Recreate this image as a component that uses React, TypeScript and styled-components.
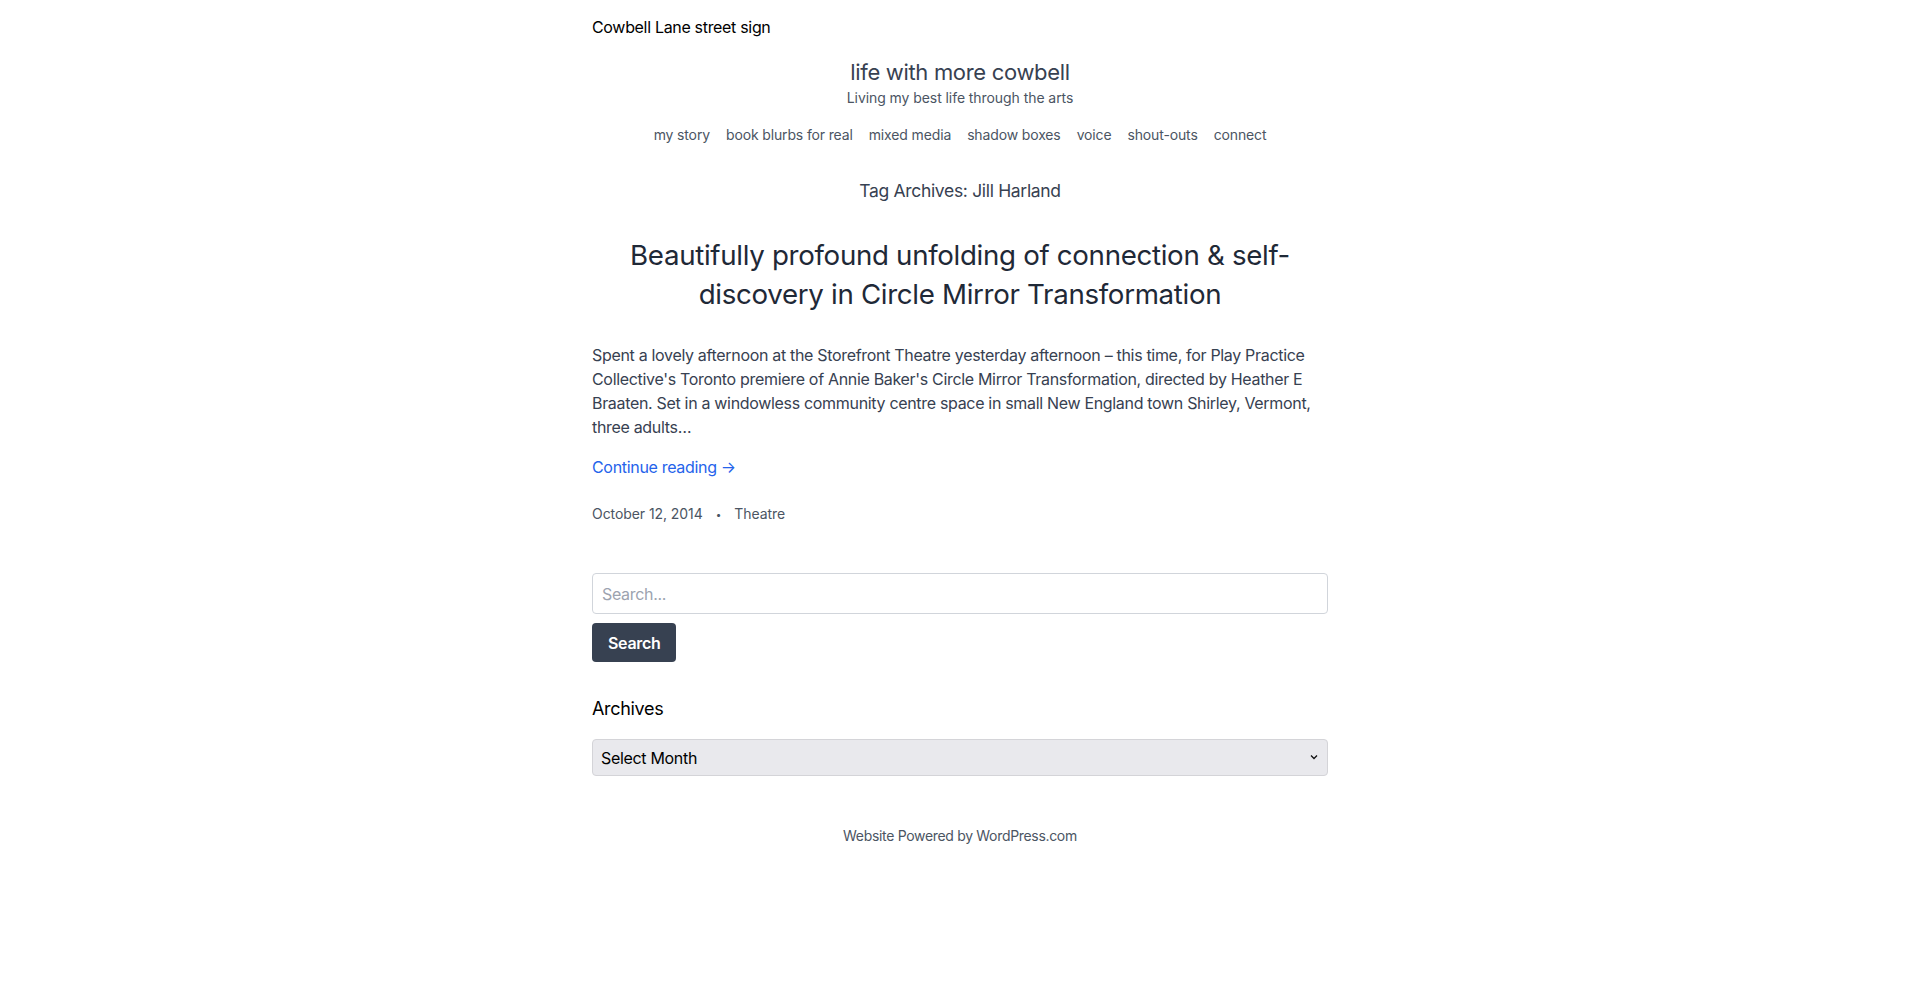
import styled, { createGlobalStyle } from "styled-components";

const GlobalStyle = createGlobalStyle`
  body {
    margin: 0;
    background: #ffffff;
    font-family: Inter, "Noto Sans", "Liberation Sans", sans-serif;
    letter-spacing: -0.02em;
    color: #374151;
  }
  * {
    box-sizing: border-box;
  }
`;

const Page = styled.div`
  max-width: 736px;
  margin: 0 auto;
  padding-top: 15px;
  padding-bottom: 120px;
`;

const Logo = styled.a`
  display: block;
  font-size: 16px;
  line-height: 24px;
  color: #000000;
  text-decoration: none;
`;

const Header = styled.header`
  display: flex;
  flex-direction: column;
  align-items: center;
  margin-top: 18px;
`;

const SiteTitle = styled.h1`
  margin: 0;
  font-size: 22px;
  font-weight: 400;
  line-height: 30px;
  color: #374151;
`;

const Tagline = styled.p`
  margin: 1px 0 0;
  font-size: 14px;
  line-height: 20px;
  letter-spacing: -0.005em;
  color: #4b5563;
`;

const Nav = styled.nav`
  display: flex;
  gap: 16px;
  margin-top: 17px;
`;

const NavLink = styled.a`
  font-size: 14px;
  line-height: 20px;
  letter-spacing: -0.01em;
  color: #4b5563;
  text-decoration: none;
`;

const ArchiveTitle = styled.h2`
  margin: 32px 0 0;
  text-align: center;
  font-size: 17.5px;
  font-weight: 400;
  line-height: 28px;
  color: #374151;
`;

const PostTitle = styled.h3`
  margin: 31px 0 0;
  text-align: center;
  font-size: 27.7px;
  font-weight: 400;
  line-height: 39px;
  color: #1f2937;
`;

const Excerpt = styled.p`
  margin: 29px 0 0;
  font-size: 16px;
  line-height: 24px;
  color: #374151;
`;

const MoreLink = styled.a`
  display: inline-block;
  margin-top: 16px;
  font-size: 16px;
  line-height: 24px;
  color: #2563eb;
  text-decoration: none;
`;

const Meta = styled.div`
  display: flex;
  align-items: center;
  gap: 13px;
  margin-top: 25px;
  font-size: 14px;
  line-height: 20px;
  letter-spacing: -0.005em;
  color: #4b5563;
`;

const Dot = styled.span`
  font-size: 10px;
`;

const SearchForm = styled.form`
  display: flex;
  flex-direction: column;
  align-items: flex-start;
  gap: 9px;
  margin-top: 49px;
`;

const SearchInput = styled.input`
  width: 100%;
  height: 41px;
  padding: 0 9px;
  border: 1px solid #d1d5db;
  border-radius: 4px;
  font-family: inherit;
  font-size: 16px;
  letter-spacing: -0.02em;
  color: #111827;
  &::placeholder {
    color: #9ca3af;
  }
`;

const SearchButton = styled.button`
  height: 39px;
  padding: 0 16px;
  border: none;
  border-radius: 4px;
  background: #374151;
  color: #ffffff;
  font-family: inherit;
  font-size: 16px;
  font-weight: 600;
  letter-spacing: -0.02em;
`;

const WidgetTitle = styled.h2`
  margin: 33px 0 0;
  font-size: 18px;
  font-weight: 400;
  line-height: 28px;
  color: #000000;
`;

const SelectWrap = styled.div`
  position: relative;
  margin-top: 16px;
`;

const MonthSelect = styled.select`
  appearance: none;
  width: 100%;
  height: 37px;
  padding: 0 8px;
  border: 1px solid #d4d4d8;
  border-radius: 4px;
  background: #e9e9ed;
  color: #000000;
  font-family: inherit;
  font-size: 16px;
  letter-spacing: -0.02em;
`;

const Chevron = styled.svg`
  position: absolute;
  right: 10px;
  top: 15px;
  pointer-events: none;
`;

const Footer = styled.footer`
  margin-top: 50px;
  text-align: center;
  font-size: 14px;
  line-height: 20px;
  color: #4b5563;
`;

const navItems = [
  "my story",
  "book blurbs for real",
  "mixed media",
  "shadow boxes",
  "voice",
  "shout-outs",
  "connect",
];

const App = () => {
  return (
    <>
      <GlobalStyle />
      <Page>
        <Logo href="#">Cowbell Lane street sign</Logo>
        <Header>
          <SiteTitle>life with more cowbell</SiteTitle>
          <Tagline>Living my best life through the arts</Tagline>
          <Nav>
            {navItems.map((item) => (
              <NavLink key={item} href="#">
                {item}
              </NavLink>
            ))}
          </Nav>
        </Header>
        <ArchiveTitle>Tag Archives: Jill Harland</ArchiveTitle>
        <article>
          <PostTitle>
            Beautifully profound unfolding of connection &amp; self-discovery in Circle Mirror
            Transformation
          </PostTitle>
          <Excerpt>
            Spent a lovely afternoon at the Storefront Theatre yesterday afternoon – this time, for
            Play Practice Collective's Toronto premiere of Annie Baker's Circle Mirror
            Transformation, directed by Heather E Braaten. Set in a windowless community centre
            space in small New England town Shirley, Vermont, three adults…
          </Excerpt>
          <MoreLink href="#">Continue reading →</MoreLink>
          <Meta>
            <span>October 12, 2014</span>
            <Dot>•</Dot>
            <span>Theatre</span>
          </Meta>
        </article>
        <SearchForm onSubmit={(e) => e.preventDefault()}>
          <SearchInput type="search" placeholder="Search..." />
          <SearchButton type="submit">Search</SearchButton>
        </SearchForm>
        <WidgetTitle>Archives</WidgetTitle>
        <SelectWrap>
          <MonthSelect defaultValue="">
            <option value="">Select Month</option>
          </MonthSelect>
          <Chevron width="8" height="6" viewBox="0 0 8 6">
            <path d="M1 1.5 L4 4.5 L7 1.5" fill="none" stroke="#111" strokeWidth="1.3" />
          </Chevron>
        </SelectWrap>
        <Footer>Website Powered by WordPress.com</Footer>
      </Page>
    </>
  );
};

export default App;
